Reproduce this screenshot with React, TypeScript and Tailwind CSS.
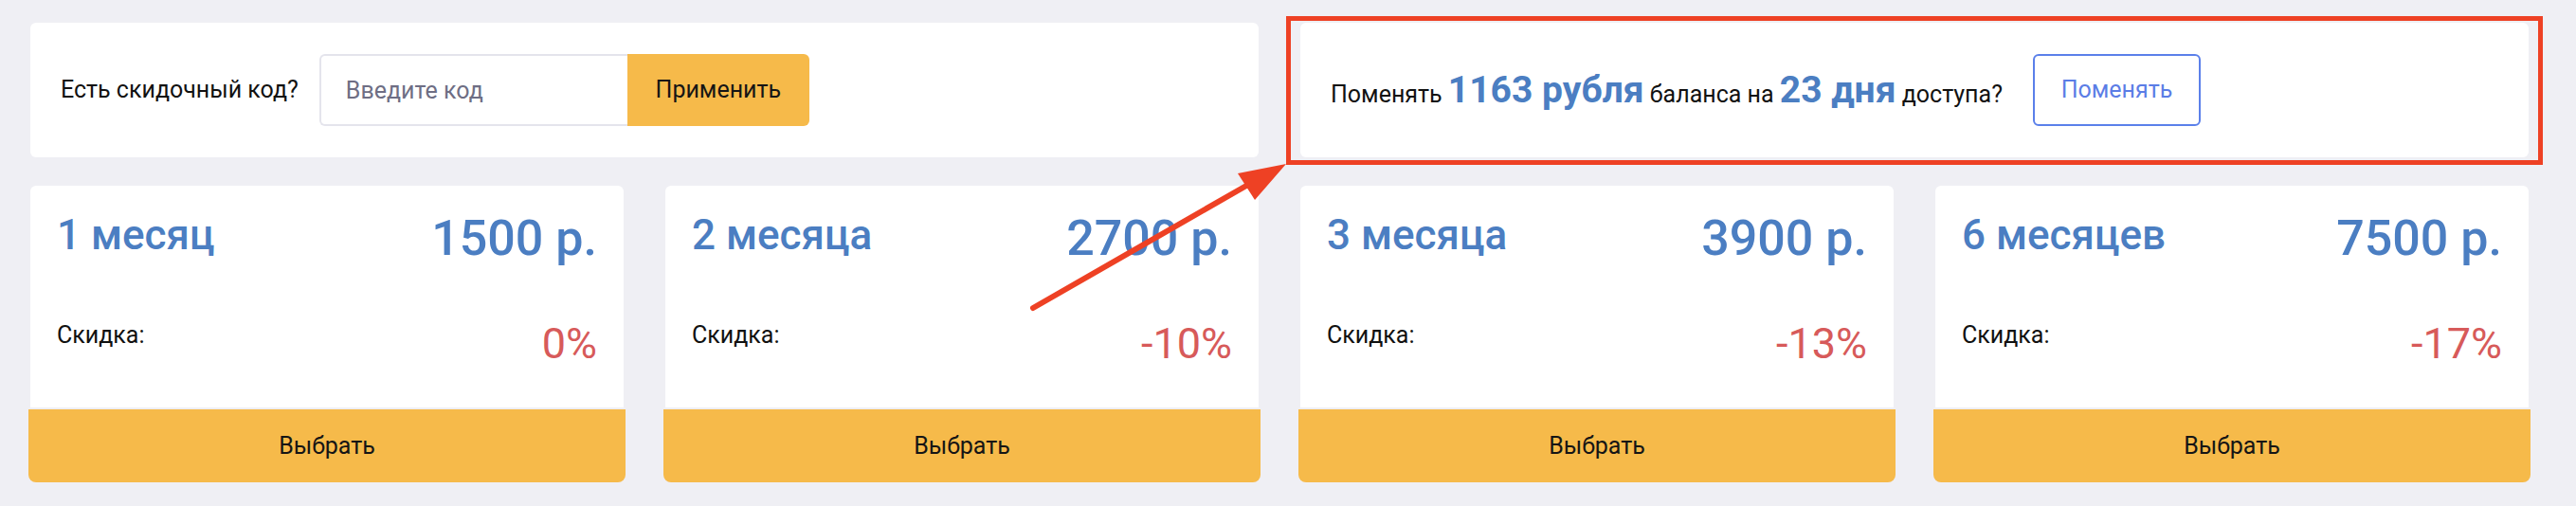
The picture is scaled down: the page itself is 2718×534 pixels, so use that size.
import React from 'react';

type Plan = {
  title: string;
  price: string;
  discount: string;
};

const plans: Plan[] = [
  { title: '1 месяц', price: '1500 р.', discount: '0%' },
  { title: '2 месяца', price: '2700 р.', discount: '-10%' },
  { title: '3 месяца', price: '3900 р.', discount: '-13%' },
  { title: '6 месяцев', price: '7500 р.', discount: '-17%' },
];

function PlanCard({ plan }: { plan: Plan }) {
  return (
    <div className="flex flex-col">
      <div className="h-[234px] rounded-t-[6px] bg-white px-[28px] pt-[30px]">
        <div className="flex items-start justify-between">
          <span className="text-[44px] leading-none font-medium text-[#4b7ec2]">{plan.title}</span>
          <span className="text-[52px] leading-none font-medium text-[#4b7ec2]">{plan.price}</span>
        </div>
        <div className="mt-[62px] flex items-start justify-between">
          <span className="mt-[1px] text-[25px] leading-none text-[#111]">Скидка:</span>
          <span className="text-[45px] leading-none text-[#d75a5a]">{plan.discount}</span>
        </div>
      </div>
      <button className="-mx-[2px] mt-[2px] h-[77px] rounded-b-[8px] bg-[#f6ba4a] text-[25px] text-[#151515]">
        Выбрать
      </button>
    </div>
  );
}

export default function App() {
  return (
    <div className="relative min-h-screen bg-[#efeff4] font-['Roboto',sans-serif]">
      <div className="w-[2700px] pl-[32px] pr-[32px] pt-[24px]">
        {/* верхний ряд */}
        <div className="grid grid-cols-2 gap-[44px]">
          <div className="flex h-[142px] items-center rounded-[6px] bg-white pl-[32px]">
            <span className="text-[25px] text-[#111]">Есть скидочный код?</span>
            <div className="ml-[22px] flex h-[76px]">
              <input
                type="text"
                placeholder="Введите код"
                className="h-full w-[325px] rounded-l-[6px] border-2 border-r-0 border-[#e4e4ec] bg-white px-[26px] text-[25px] text-[#333] placeholder:text-[#6e6e84] outline-none"
              />
              <button className="h-full w-[192px] rounded-r-[6px] bg-[#f6ba4a] text-[25px] text-[#151515]">
                Применить
              </button>
            </div>
          </div>

          <div className="relative">
            <div className="flex h-[142px] items-center rounded-[6px] bg-white pl-[32px]">
              <p className="text-[25px] text-[#111]">
                Поменять <span className="text-[39px] font-bold text-[#4b7ec2]">1163 рубля</span> баланса на{' '}
                <span className="text-[39px] font-bold text-[#4b7ec2]">23 дня</span> доступа?
              </p>
              <button className="ml-[32px] h-[76px] w-[177px] rounded-[6px] border-2 border-[#5b80ea] text-[25px] text-[#5b7de6]">
                Поменять
              </button>
            </div>
            <div className="pointer-events-none absolute -top-[7px] -right-[15px] -bottom-[8px] -left-[15px] border-[5px] border-[#ee4124]" />
          </div>
        </div>

        {/* тарифы */}
        <div className="mt-[30px] grid grid-cols-4 gap-[44px]">
          {plans.map((p) => (
            <PlanCard key={p.title} plan={p} />
          ))}
        </div>
      </div>

      {/* стрелка */}
      <svg
        className="pointer-events-none absolute top-0 left-0"
        width="2718"
        height="534"
        viewBox="0 0 2718 534"
      >
        <line x1="1090" y1="325" x2="1322" y2="192" stroke="#ee4124" strokeWidth="6" strokeLinecap="round" />
        <polygon points="1357,173 1306,183 1324,211" fill="#ee4124" />
      </svg>
    </div>
  );
}
